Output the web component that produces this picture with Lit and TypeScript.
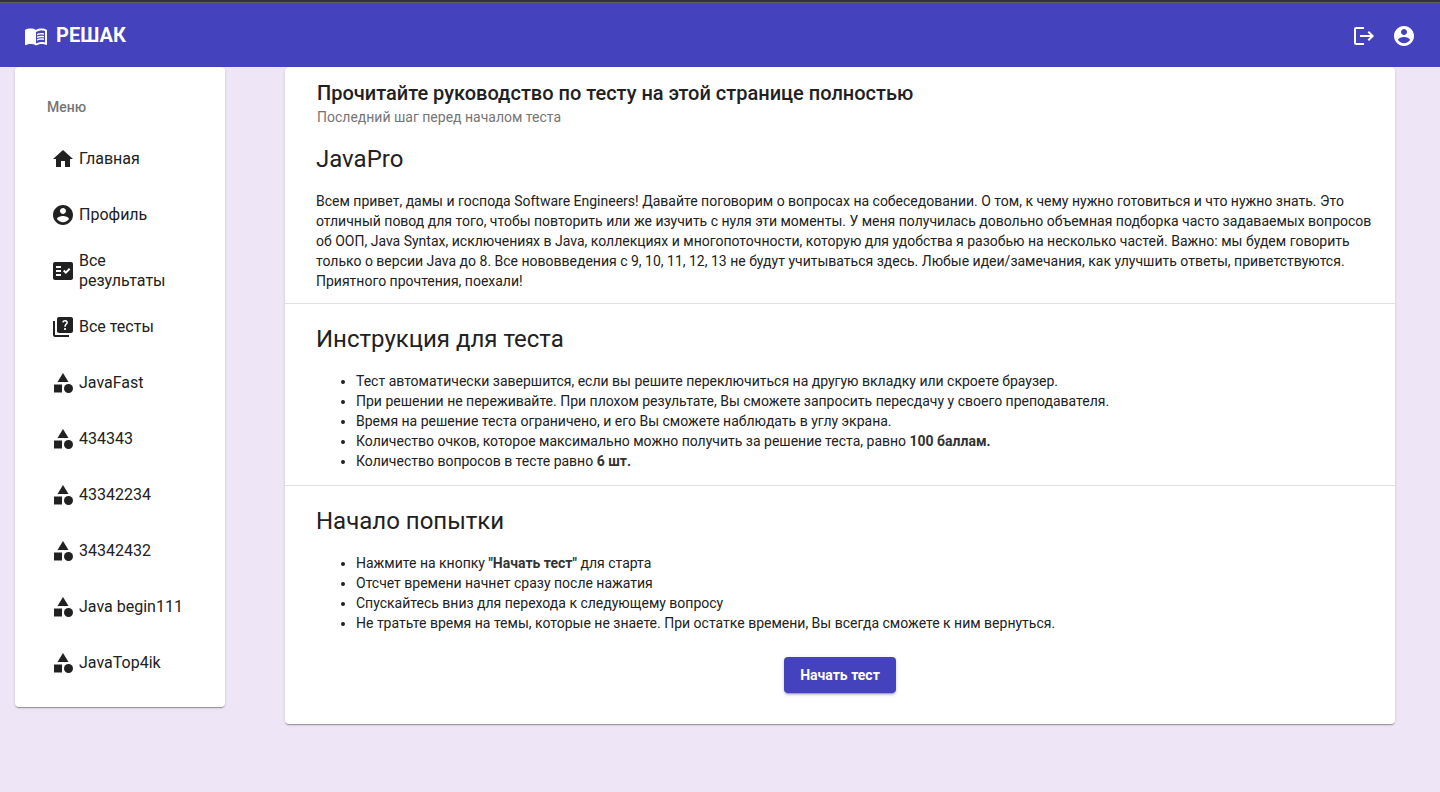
import { LitElement, html, css, svg } from "lit";
import { customElement } from "lit/decorators.js";

const icons = {
  book: svg`<path d="M21 5c-1.11-.35-2.33-.5-3.5-.5-1.95 0-4.05.4-5.5 1.5-1.45-1.1-3.55-1.5-5.5-1.5S2.45 4.9 1 6v14.65c0 .25.25.5.5.5.1 0 .15-.05.25-.05C3.1 20.45 5.05 20 6.5 20c1.95 0 4.05.4 5.5 1.5 1.35-.85 3.8-1.5 5.5-1.5 1.65 0 3.35.3 4.75 1.05.1.05.15.05.25.05.25 0 .5-.25.5-.5V6c-.6-.45-1.25-.75-2-1zm0 13.5c-1.1-.35-2.3-.5-3.5-.5-1.7 0-4.15.65-5.5 1.5V8c1.35-.85 3.8-1.5 5.5-1.5 1.2 0 2.4.15 3.5.5v11.5z"/><path d="M17.5 10.5c.88 0 1.73.09 2.5.26V9.24c-.79-.15-1.64-.24-2.5-.24-1.7 0-3.24.29-4.5.83v1.66c1.13-.64 2.7-.99 4.5-.99zM13 12.49v1.66c1.13-.64 2.7-.99 4.5-.99.88 0 1.73.09 2.5.26V11.9c-.79-.15-1.64-.24-2.5-.24-1.7 0-3.24.3-4.5.83zM17.5 14.33c-1.7 0-3.24.29-4.5.83v1.66c1.13-.64 2.7-.99 4.5-.99.88 0 1.73.09 2.5.26v-1.52c-.79-.16-1.64-.24-2.5-.24z"/>`,
  logout: svg`<path d="M17 7l-1.41 1.41L18.17 11H8v2h10.17l-2.58 2.58L17 17l5-5zM4 5h8V3H4c-1.1 0-2 .9-2 2v14c0 1.1.9 2 2 2h8v-2H4V5z"/>`,
  account: svg`<path d="M12 2C6.48 2 2 6.48 2 12s4.48 10 10 10 10-4.48 10-10S17.52 2 12 2zm0 3c1.66 0 3 1.34 3 3s-1.34 3-3 3-3-1.34-3-3 1.34-3 3-3zm0 14.2c-2.5 0-4.71-1.28-6-3.22.03-1.99 4-3.08 6-3.08 1.99 0 5.97 1.09 6 3.08-1.29 1.94-3.5 3.22-6 3.22z"/>`,
  home: svg`<path d="M10 20v-6h4v6h5v-8h3L12 3 2 12h3v8z"/>`,
  results: svg`<path fill-rule="evenodd" d="M20 3H4c-1.1 0-2 .9-2 2v14c0 1.1.9 2 2 2h16c1.1 0 2-.9 2-2V5c0-1.1-.9-2-2-2zM10 17H5v-2h5v2zm0-4H5v-2h5v2zm0-4H5V7h5v2zm4.82 6L12 12.16l1.41-1.41 1.41 1.42L17.99 9l1.42 1.42L14.82 15z"/>`,
  quiz: svg`<path d="M4 6H2v14c0 1.1.9 2 2 2h14v-2H4V6z"/><path d="M20 2H8c-1.1 0-2 .9-2 2v12c0 1.1.9 2 2 2h12c1.1 0 2-.9 2-2V4c0-1.1-.9-2-2-2zm-5.99 13c-.59 0-1.05-.47-1.05-1.05 0-.59.47-1.04 1.05-1.04.59 0 1.04.45 1.04 1.04-.01.58-.45 1.05-1.04 1.05zm2.5-6.17c-.63.93-1.23 1.21-1.56 1.81-.13.24-.18.4-.18 1.18h-1.52c0-.41-.06-1.08.26-1.65.41-.73 1.18-1.16 1.63-1.8.48-.68.21-1.94-1.14-1.94-.88 0-1.32.67-1.5 1.23l-1.37-.57C11.51 5.96 12.52 5 13.99 5c1.23 0 2.08.56 2.51 1.26.37.61.58 1.73.01 2.57z"/>`,
  category: svg`<path d="M12 2l-5.5 9h11z"/><circle cx="17.5" cy="17.5" r="4.5"/><path d="M3 13.5h8v8H3z"/>`,
};

type IconName = keyof typeof icons;

const icon = (name: IconName) =>
  html`<svg class="icon" viewBox="0 0 24 24" aria-hidden="true">${icons[name]}</svg>`;

const menu: { icon: IconName; label: string }[] = [
  { icon: "home", label: "Главная" },
  { icon: "account", label: "Профиль" },
  { icon: "results", label: "Все результаты" },
  { icon: "quiz", label: "Все тесты" },
  ...["JavaFast", "434343", "43342234", "34342432", "Java begin111", "JavaTop4ik"].map(
    (label) => ({ icon: "category" as IconName, label })
  ),
];

@customElement("app-root")
export class AppRoot extends LitElement {
  static styles = css`
    :host {
      display: block;
      box-sizing: border-box;
      min-height: 100vh;
      background: #eee5f6;
      color: #212121;
      font: 400 14px/20px Roboto, "Noto Sans", sans-serif;
    }
    *, *::before, *::after { box-sizing: border-box; }
    h1, h2, p, ul { margin: 0; }
    .icon { display: block; flex: none; width: 24px; height: 24px; fill: currentColor; }
    .bar {
      display: flex;
      align-items: center;
      justify-content: space-between;
      height: 67px;
      padding: 3px 24px 0;
      border-top: 2px solid #333235;
      background: #4442bc;
      box-shadow: inset 0 1px #625f60;
      color: #fff;
    }
    .brand {
      display: flex;
      align-items: center;
      gap: 8px;
      color: inherit;
      font-size: 20px;
      font-weight: 700;
      line-height: 32px;
      text-decoration: none;
    }
    .brand-name { padding-bottom: 2px; line-height: 30px; }
    .actions { display: flex; gap: 16px; }
    .icon-button {
      padding: 0;
      border: 0;
      background: none;
      color: inherit;
      cursor: pointer;
    }
    .page {
      display: grid;
      grid-template-columns: 210px minmax(0, 1fr);
      align-items: start;
      gap: 60px;
      padding: 0 45px 0 15px;
    }
    .card {
      border-radius: 4px;
      background: #fff;
      box-shadow: 0 2px 1px -1px rgba(0, 0, 0, 0.2), 0 1px 1px rgba(0, 0, 0, 0.14),
        0 1px 3px rgba(0, 0, 0, 0.12);
    }
    .side { padding: 30px 32px 16px; }
    .side-title { color: #757575; font-size: 14px; font-weight: 500; line-height: 20px; }
    .menu { margin-top: 14px; padding: 0; list-style: none; }
    .menu-link {
      display: flex;
      align-items: center;
      gap: 4px;
      min-height: 56px;
      padding: 0 4px;
      color: inherit;
      font-size: 16px;
      text-decoration: none;
    }
    .head { padding: 10px 32px 0; }
    .title { font-size: 20px; font-weight: 500; line-height: 32px; }
    .subtitle { color: #757575; line-height: 16px; }
    .section { padding: 18px 16px 12px 31px; }
    .section + .section { padding-top: 19px; padding-bottom: 14px; border-top: 1px solid #e0e0e0; }
    .heading { margin-bottom: 16px; font-size: 24px; font-weight: 400; line-height: 32px; }
    .list { padding-left: 40px; }
    .actions-row { display: flex; justify-content: center; padding: 10px 16px 31px; }
    b { color: #333; font-weight: 700; }
    .start {
      height: 36px;
      padding: 0 16px;
      border: 0;
      border-radius: 4px;
      background: #4442bc;
      color: #fff;
      font: inherit;
      font-weight: 700;
      box-shadow: 0 3px 1px -2px rgba(0, 0, 0, 0.2), 0 2px 2px rgba(0, 0, 0, 0.14),
        0 1px 5px rgba(0, 0, 0, 0.12);
      cursor: pointer;
    }
  `;

  render() {
    return html`
      <header class="bar">
        <a class="brand" href="#">${icon("book")}<span class="brand-name">РЕШАК</span></a>
        <div class="actions">
          <button class="icon-button" type="button" aria-label="Выйти">${icon("logout")}</button>
          <button class="icon-button" type="button" aria-label="Профиль">${icon("account")}</button>
        </div>
      </header>
      <div class="page">
        <nav class="card side" aria-labelledby="menu-title">
          <h2 class="side-title" id="menu-title">Меню</h2>
          <ul class="menu">
            ${menu.map(
              (item) => html`<li>
                <a class="menu-link" href="#">${icon(item.icon)}<span>${item.label}</span></a>
              </li>`
            )}
          </ul>
        </nav>
        <main class="card">
          <header class="head">
            <h1 class="title">Прочитайте руководство по тесту на этой странице полностью</h1>
            <p class="subtitle">Последний шаг перед началом теста</p>
          </header>
          <section class="section">
            <h2 class="heading">JavaPro</h2>
            <p>
              Всем привет, дамы и господа Software Engineers! Давайте поговорим о вопросах на
              собеседовании. О том, к чему нужно готовиться и что нужно знать. Это отличный повод
              для того, чтобы повторить или же изучить с нуля эти моменты. У меня получилась
              довольно объемная подборка часто задаваемых вопросов об ООП, Java Syntax, исключениях
              в Java, коллекциях и многопоточности, которую для удобства я разобью на несколько
              частей. Важно: мы будем говорить только о версии Java до 8. Все нововведения с 9, 10,
              11, 12, 13 не будут учитываться здесь. Любые идеи/замечания, как улучшить ответы,
              приветствуются. Приятного прочтения, поехали!
            </p>
          </section>
          <section class="section">
            <h2 class="heading">Инструкция для теста</h2>
            <ul class="list">
              <li>Тест автоматически завершится, если вы решите переключиться на другую вкладку или скроете браузер.</li>
              <li>При решении не переживайте. При плохом результате, Вы сможете запросить пересдачу у своего преподавателя.</li>
              <li>Время на решение теста ограничено, и его Вы сможете наблюдать в углу экрана.</li>
              <li>Количество очков, которое максимально можно получить за решение теста, равно <b>100 баллам.</b></li>
              <li>Количество вопросов в тесте равно <b>6 шт.</b></li>
            </ul>
          </section>
          <section class="section">
            <h2 class="heading">Начало попытки</h2>
            <ul class="list">
              <li>Нажмите на кнопку <b>"Начать тест"</b> для старта</li>
              <li>Отсчет времени начнет сразу после нажатия</li>
              <li>Спускайтесь вниз для перехода к следующему вопросу</li>
              <li>Не тратьте время на темы, которые не знаете. При остатке времени, Вы всегда сможете к ним вернуться.</li>
            </ul>
          </section>
          <div class="actions-row">
            <button class="start" type="button">Начать тест</button>
          </div>
        </main>
      </div>
    `;
  }
}
